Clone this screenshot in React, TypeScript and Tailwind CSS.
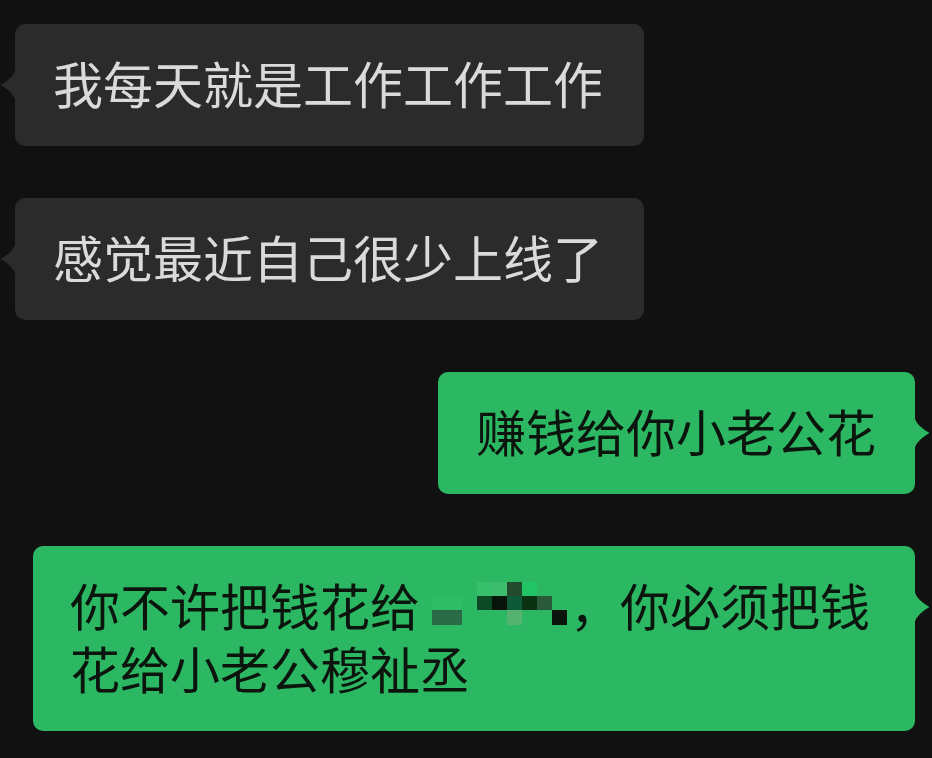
import React from "react";

const font = { fontFamily: '"Noto Sans CJK SC", "Noto Sans", sans-serif' };

type Side = "left" | "right";

function Tail({ side, color }: { side: Side; color: string }) {
  // small curved notch that points at the speaker
  const d =
    side === "left"
      ? "M16 0 C16 9 9 15 2 19 Q0 20 2 21 C9 25 16 31 16 40 Z"
      : "M0 0 C0 9 7 15 14 19 Q16 20 14 21 C7 25 0 31 0 40 Z";
  return (
    <svg
      width="16"
      height="40"
      viewBox="0 0 16 40"
      className={
        side === "left"
          ? "absolute top-[41px] left-[-15px]"
          : "absolute top-[41px] right-[-15px]"
      }
    >
      <path d={d} fill={color} />
    </svg>
  );
}

function Bubble({
  side,
  children,
  className = "",
}: {
  side: Side;
  children: React.ReactNode;
  className?: string;
}) {
  const mine = side === "right";
  return (
    <div
      className={
        "relative rounded-[10px] pt-[27px] pb-[32px] text-[50px] leading-[63px] " +
        (mine ? "bg-[#2cb862] text-[#0b150e] " : "bg-[#2b2b2b] text-[#dadada] ") +
        className
      }
    >
      <Tail side={side} color={mine ? "#2cb862" : "#2b2b2b"} />
      {children}
    </div>
  );
}

// blurred name in the last message
function Mosaic() {
  const cells: [number, number, number, number, string][] = [
    [57, 9, 15, 14, "#37bf6b"],
    [72, 9, 15, 14, "#3fbd6e"],
    [87, 9, 15, 14, "#234a2c"],
    [102, 9, 15, 14, "#22c465"],
    [12, 23, 30, 14, "#30bb67"],
    [57, 23, 15, 14, "#0b4a25"],
    [72, 23, 15, 14, "#06140c"],
    [87, 23, 15, 14, "#0e5a38"],
    [102, 23, 15, 14, "#0a3212"],
    [117, 23, 15, 14, "#2b5a3b"],
    [12, 37, 30, 15, "#2a6a45"],
    [87, 37, 15, 15, "#55b271"],
    [132, 37, 15, 15, "#0a140c"],
  ];
  return (
    <svg width="150" height="63" viewBox="0 0 150 63" className="inline-block align-top">
      {cells.map(([x, y, w, h, c], i) => (
        <rect key={i} x={x} y={y} width={w} height={h} fill={c} />
      ))}
    </svg>
  );
}

export default function App() {
  return (
    <div className="w-[932px] h-[758px] overflow-hidden bg-[#111111]" style={font}>
      <div className="flex flex-col gap-[52px] pt-[24px]">
        <div className="flex pl-[15px]">
          <Bubble side="left" className="w-[629px] pl-[38px] pr-[20px] whitespace-nowrap">
            我每天就是工作工作工作
          </Bubble>
        </div>
        <div className="flex pl-[15px]">
          <Bubble side="left" className="w-[629px] pl-[38px] pr-[20px] whitespace-nowrap">
            感觉最近自己很少上线了
          </Bubble>
        </div>
        <div className="flex justify-end pr-[17px]">
          <Bubble side="right" className="w-[477px] pl-[38px] pr-[20px] whitespace-nowrap">
            赚钱给你小老公花
          </Bubble>
        </div>
        <div className="flex justify-end pr-[17px]">
          <Bubble side="right" className="w-[882px] pl-[37px] pr-[25px]">
            你不许把钱花给
            <Mosaic />
            ，你必须把钱花给小老公穆祉丞
          </Bubble>
        </div>
      </div>
    </div>
  );
}
